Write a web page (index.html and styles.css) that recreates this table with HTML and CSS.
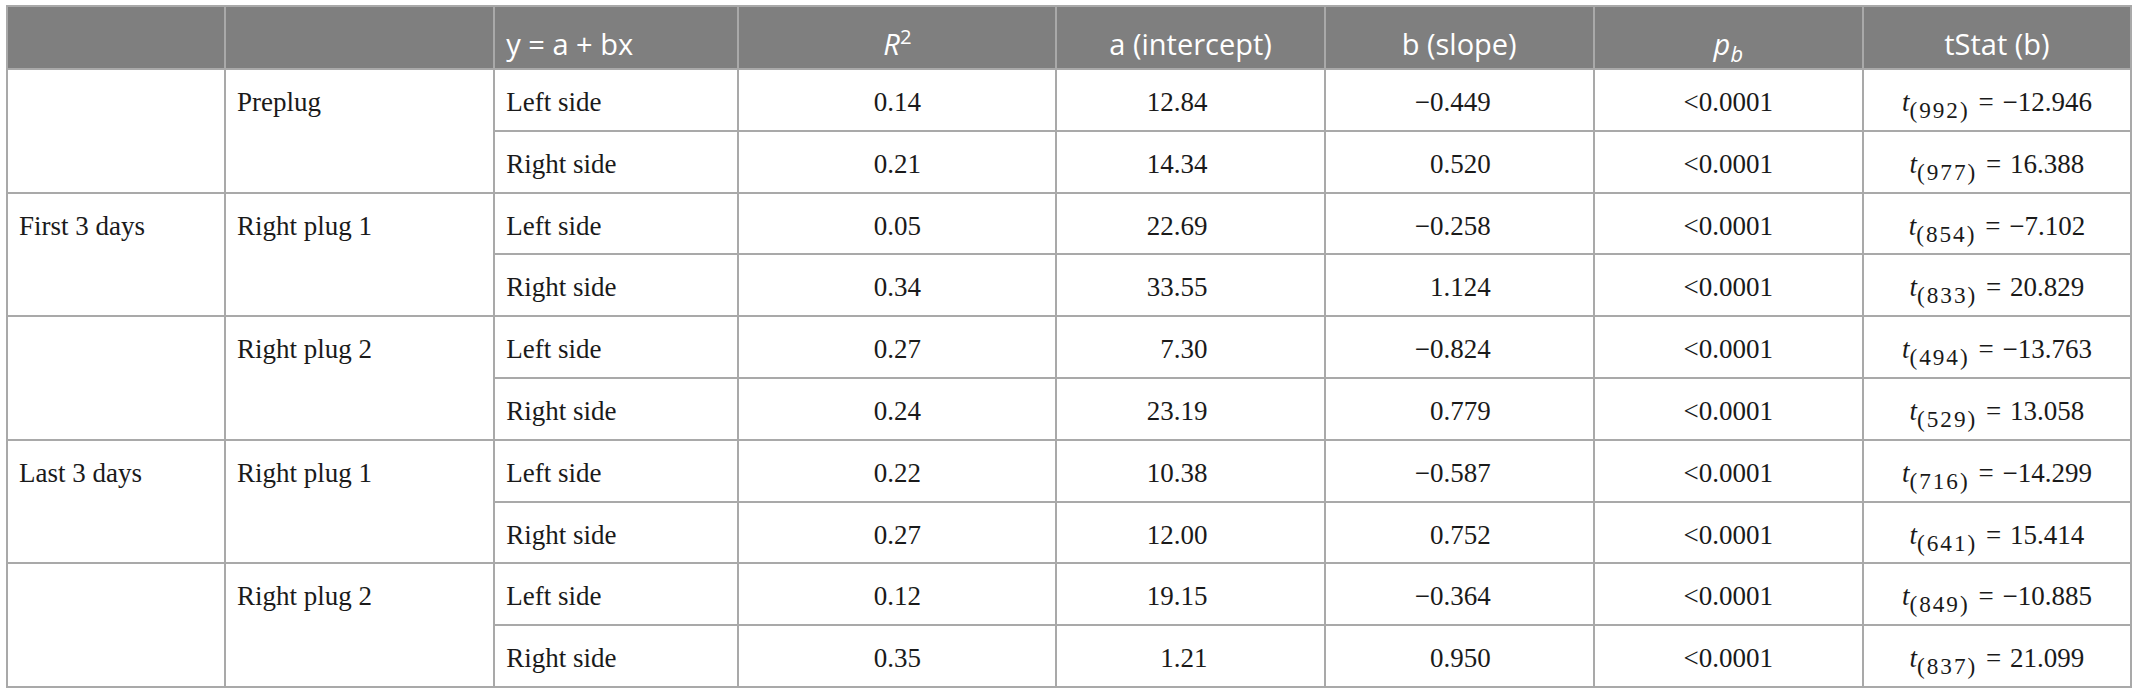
FILE: index.html
```html
<!DOCTYPE html>
<html lang="en">
<head>
<meta charset="utf-8">
<title>Regression table</title>
<link rel="stylesheet" href="styles.css">
</head>
<body>
<table class="reg">
  <colgroup>
    <col class="w-period">
    <col class="w-cond">
    <col class="w-side">
    <col class="w-r2">
    <col class="w-a">
    <col class="w-b">
    <col class="w-p">
    <col class="w-t">
  </colgroup>
  <thead>
    <tr>
      <th></th>
      <th></th>
      <th class="txt">y = a + bx</th>
      <th><i>R</i><sup>2</sup></th>
      <th>a (intercept)</th>
      <th>b (slope)</th>
      <th><i>p<sub>b</sub></i></th>
      <th>tStat (b)</th>
    </tr>
  </thead>
  <tbody>
    <tr>
      <td rowspan="2" class="txt"></td>
      <td rowspan="2" class="txt">Preplug</td>
      <td class="txt">Left side</td>
      <td>0.14</td>
      <td class="num-a">12.84</td>
      <td class="num-b">−0.449</td>
      <td>&lt;0.0001</td>
      <td class="tstat"><i>t</i><sub>(992)</sub> = −12.946</td>
    </tr>
    <tr>
      <td class="txt">Right side</td>
      <td>0.21</td>
      <td class="num-a">14.34</td>
      <td class="num-b">0.520</td>
      <td>&lt;0.0001</td>
      <td class="tstat"><i>t</i><sub>(977)</sub> = 16.388</td>
    </tr>
    <tr>
      <td rowspan="2" class="txt">First 3 days</td>
      <td rowspan="2" class="txt">Right plug 1</td>
      <td class="txt">Left side</td>
      <td>0.05</td>
      <td class="num-a">22.69</td>
      <td class="num-b">−0.258</td>
      <td>&lt;0.0001</td>
      <td class="tstat"><i>t</i><sub>(854)</sub> = −7.102</td>
    </tr>
    <tr>
      <td class="txt">Right side</td>
      <td>0.34</td>
      <td class="num-a">33.55</td>
      <td class="num-b">1.124</td>
      <td>&lt;0.0001</td>
      <td class="tstat"><i>t</i><sub>(833)</sub> = 20.829</td>
    </tr>
    <tr>
      <td rowspan="2" class="txt"></td>
      <td rowspan="2" class="txt">Right plug 2</td>
      <td class="txt">Left side</td>
      <td>0.27</td>
      <td class="num-a">7.30</td>
      <td class="num-b">−0.824</td>
      <td>&lt;0.0001</td>
      <td class="tstat"><i>t</i><sub>(494)</sub> = −13.763</td>
    </tr>
    <tr>
      <td class="txt">Right side</td>
      <td>0.24</td>
      <td class="num-a">23.19</td>
      <td class="num-b">0.779</td>
      <td>&lt;0.0001</td>
      <td class="tstat"><i>t</i><sub>(529)</sub> = 13.058</td>
    </tr>
    <tr>
      <td rowspan="2" class="txt">Last 3 days</td>
      <td rowspan="2" class="txt">Right plug 1</td>
      <td class="txt">Left side</td>
      <td>0.22</td>
      <td class="num-a">10.38</td>
      <td class="num-b">−0.587</td>
      <td>&lt;0.0001</td>
      <td class="tstat"><i>t</i><sub>(716)</sub> = −14.299</td>
    </tr>
    <tr>
      <td class="txt">Right side</td>
      <td>0.27</td>
      <td class="num-a">12.00</td>
      <td class="num-b">0.752</td>
      <td>&lt;0.0001</td>
      <td class="tstat"><i>t</i><sub>(641)</sub> = 15.414</td>
    </tr>
    <tr>
      <td rowspan="2" class="txt"></td>
      <td rowspan="2" class="txt">Right plug 2</td>
      <td class="txt">Left side</td>
      <td>0.12</td>
      <td class="num-a">19.15</td>
      <td class="num-b">−0.364</td>
      <td>&lt;0.0001</td>
      <td class="tstat"><i>t</i><sub>(849)</sub> = −10.885</td>
    </tr>
    <tr>
      <td class="txt">Right side</td>
      <td>0.35</td>
      <td class="num-a">1.21</td>
      <td class="num-b">0.950</td>
      <td>&lt;0.0001</td>
      <td class="tstat"><i>t</i><sub>(837)</sub> = 21.099</td>
    </tr>
  </tbody>
</table>
</body>
</html>
```

FILE: styles.css
```css
html, body {
  margin: 0;
  padding: 0;
  background: #ffffff;
}

body {
  padding: 5px 0 0 6px;
}

.reg {
  border-collapse: collapse;
  table-layout: fixed;
  width: 2126px;
  color: #1a1a1a;
  font-family: "Liberation Serif", "Times New Roman", serif;
  font-size: 27px;
}

.w-period { width: 218px; }
.w-cond { width: 269px; }
.w-side { width: 244px; }
.w-r2 { width: 318px; }
.w-a { width: 268px; }
.w-b { width: 269px; }
.w-p { width: 269px; }
.w-t { width: 268px; }

.reg th,
.reg td {
  border: 2px solid #a9a9a9;
  padding: 0 11px;
  overflow: hidden;
  white-space: nowrap;
}

.reg thead tr {
  height: 63px;
}

.reg th {
  background: #7f7f7f;
  color: #ffffff;
  font-family: "Open Sans", "Noto Sans", sans-serif;
  font-weight: 400;
  font-size: 29px;
  text-align: center;
  vertical-align: top;
  padding-top: 19px;
  line-height: 36px;
}

.reg th sup {
  font-size: 0.7em;
  line-height: 0;
  vertical-align: 0.55em;
}

.reg th sub {
  font-size: 0.75em;
  line-height: 0;
  vertical-align: -0.3em;
}

.reg tbody tr {
  height: 61.8px;
}

.reg td {
  text-align: center;
  vertical-align: top;
  padding-top: 16px;
  line-height: 32px;
}

.reg .txt {
  text-align: left;
}

.reg td.num-a {
  text-align: right;
  padding-right: 116px;
}

.reg td.num-b {
  text-align: right;
  padding-right: 102px;
}

.reg td.tstat {
  word-spacing: 2px;
}

.reg td sub {
  font-size: 0.86em;
  line-height: 0;
  vertical-align: -0.32em;
  letter-spacing: 2px;
}
```
